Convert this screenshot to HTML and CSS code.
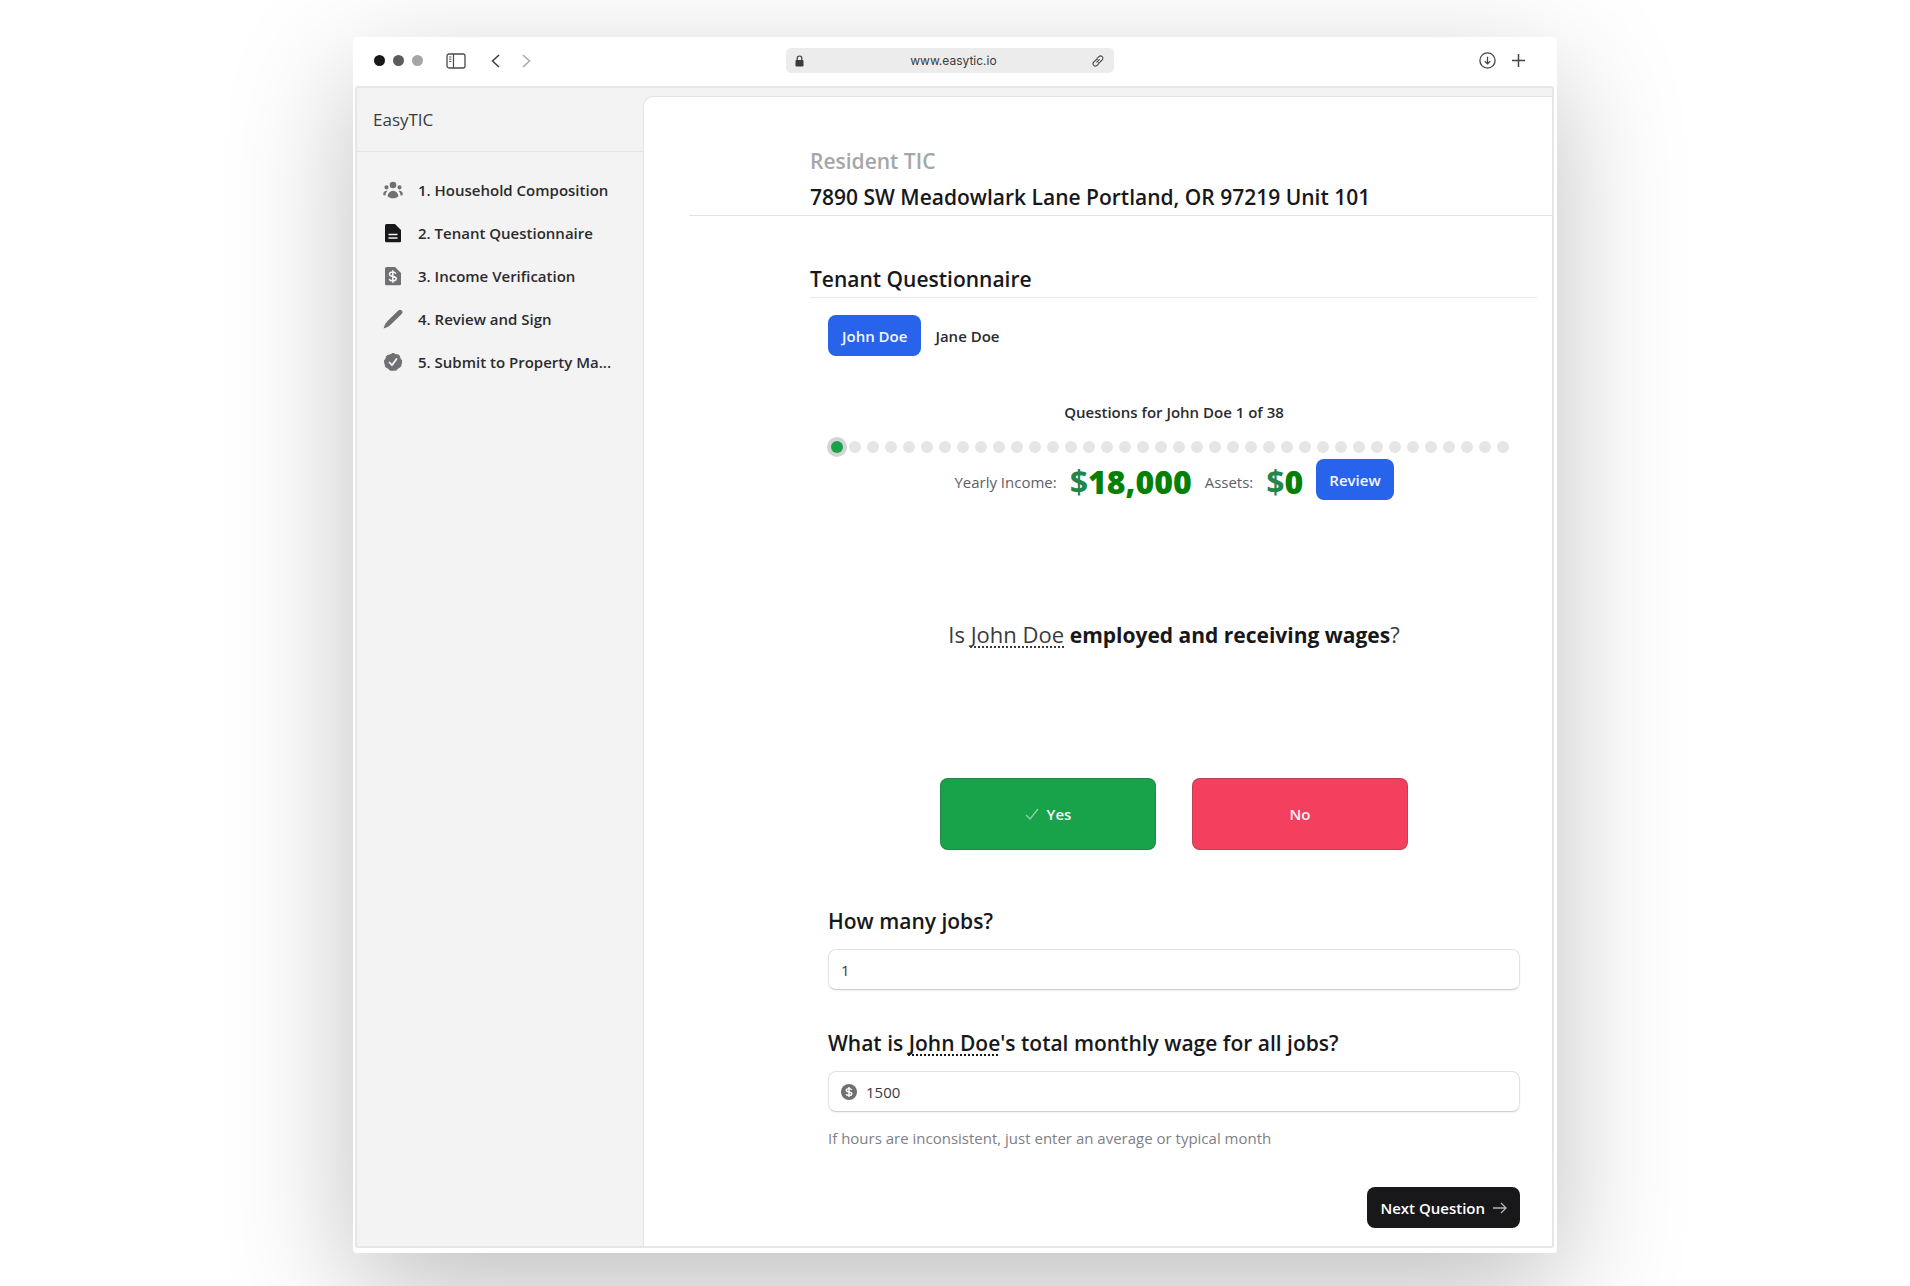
FILE: index.html
```html
<!DOCTYPE html>
<html lang="en">
<head>
<meta charset="utf-8">
<meta name="viewport" content="width=device-width, initial-scale=1">
<title>EasyTIC – Tenant Questionnaire</title>
<link rel="stylesheet" href="styles.css">
</head>
<body>
<div class="window">
  <header class="toolbar">
    <div class="toolbar-left">
      <span class="lights"><i class="light light-close"></i><i class="light light-min"></i><i class="light light-max"></i></span>
      <button class="tool tool-sidebar" aria-label="Toggle sidebar"><svg width="20" height="16" viewBox="0 0 20 16" fill="none" stroke="#4a4a4c"><rect x="1" y="1" width="18" height="14" rx="2" stroke-width="1.3"/><path d="M7.500 1v14" stroke-width="1.2"/><path d="M3 4h2.500M3 6.200h2.500M3 8.400h2.500" stroke-width=".9"/></svg></button>
      <button class="tool tool-back" aria-label="Back"><svg width="9" height="14" viewBox="0 0 9 14" fill="none" stroke="#3c3c3e" stroke-width="1.500"><path d="M8 1 1.500 7 8 13"/></svg></button>
      <button class="tool" aria-label="Forward"><svg width="9" height="14" viewBox="0 0 9 14" fill="none" stroke="#a8a8aa" stroke-width="1.500"><path d="m1 1 6.500 6L1 13"/></svg></button>
    </div>
    <div class="address">
      <svg width="9" height="12" viewBox="0 0 9 12"><rect x=".5" y="5" width="8" height="6.500" rx="1" fill="#3a3a3c"/><path d="M2.200 5.500V3.300a2.300 2.300 0 0 1 4.600 0v2.200" fill="none" stroke="#3a3a3c" stroke-width="1.200"/></svg>
      <span class="url">www.easytic.io</span>
      <svg width="12" height="12" viewBox="0 0 12 12" fill="none" stroke="#4a4a4c" stroke-width="1.100" stroke-linecap="round"><path d="M4.800 7.200 7.400 4.600M5 3.600l1.900-1.900a2.300 2.300 0 0 1 3.300 3.300L8.300 6.900a2.300 2.300 0 0 1-1.500.7M7 8.400l-1.900 1.900A2.300 2.300 0 0 1 1.800 7l1.900-1.900a2.300 2.300 0 0 1 1.500-.7"/></svg>
    </div>
    <div class="toolbar-right">
      <button class="tool" aria-label="Downloads"><svg width="17" height="17" viewBox="0 0 17 17" fill="none" stroke="#454548" stroke-width="1.300"><circle cx="8.500" cy="8.500" r="7.600"/><path d="M8.500 4.800v7M5.800 9.200l2.700 2.700 2.700-2.700"/></svg></button>
      <button class="tool" aria-label="New tab"><svg width="13" height="13" viewBox="0 0 13 13" stroke="#454548" stroke-width="1.500"><path d="M6.500 0v13M0 6.500h13"/></svg></button>
    </div>
  </header>

  <div class="app">
    <aside class="sidebar">
      <div class="brand">EasyTIC</div>
      <nav class="steps">
        <a class="step" href="#household"><svg viewBox="0 0 20 20" fill="currentColor"><path d="M10 8.300a3.300 3.300 0 1 0 0-6.600 3.300 3.300 0 0 0 0 6.600ZM5.600 7.300a2.100 2.100 0 1 1-4.200 0 2.100 2.100 0 0 1 4.200 0ZM.400 15.300C-.200 12.800 1 10.500 4.600 10.800 3.200 12 2.500 13.800 2.400 15.600ZM19.600 15.300C20.200 12.800 19 10.500 15.400 10.800 16.800 12 17.500 13.800 17.600 15.600ZM18.600 7.300a2.100 2.100 0 1 1-4.200 0 2.100 2.100 0 0 1 4.200 0ZM4.600 16.200a5.400 5.400 0 0 1 10.800 0C14 17.700 12 18.300 10 18.300s-4-.6-5.400-2.100Z"/></svg><span>1. Household Composition</span></a>
        <a class="step step-current" href="#questionnaire"><svg viewBox="0 0 20 20"><path fill="currentColor" d="M3.500 1H12l6 6v11a1.300 1.300 0 0 1-1.300 1.300H3.500A1.500 1.500 0 0 1 2 17.800V2.500A1.500 1.500 0 0 1 3.500 1Z"/><path stroke="#f3f3f3" stroke-width="1.400" d="M5.500 11.500h9M5.500 15h9"/></svg><span>2. Tenant Questionnaire</span></a>
        <a class="step" href="#income"><svg viewBox="0 0 20 20"><path fill="currentColor" d="M3.500 1H12l6 6v11a1.300 1.300 0 0 1-1.300 1.300H3.500A1.500 1.500 0 0 1 2 17.800V2.500A1.500 1.500 0 0 1 3.500 1Z"/><path fill="none" stroke="#f3f3f3" stroke-width="1.600" d="M13 7.600C12.300 6.600 11.100 6 9.600 6 7.800 6 6.500 6.800 6.500 8.200c0 3 6.700 1.300 6.700 4.400 0 1.400-1.400 2.300-3.400 2.300-1.700 0-3-.7-3.600-1.800M9.800 4.200v12.600"/></svg><span>3. Income Verification</span></a>
        <a class="step" href="#sign"><svg viewBox="0 0 20 20" fill="currentColor"><path d="M15.300 1.500a2.400 2.400 0 0 1 3.400 3.400L7.600 15.700c-1.700 1.700-4 2.800-7 3.700.8-3 2-5.500 3.700-7.200Z"/></svg><span>4. Review and Sign</span></a>
        <a class="step" href="#submit"><svg viewBox="0 0 20 20"><path fill="currentColor" d="M10 1.300 12.700 2.500 15.900 3.200 17 6.200 18.700 8.600 18.300 11.500 17.700 14.400 15.300 16.100 13.200 18.100 10.200 18.200 7.200 18.200 5 16.200 2.600 14.800 2 11.900 1.400 9 2.900 6.500 4 3.700 6.900 2.900Z" stroke="currentColor" stroke-width="1" stroke-linejoin="round"/><path fill="none" stroke="#f3f3f3" stroke-width="1.800" stroke-linecap="round" stroke-linejoin="round" d="m6.500 10.500 2.500 2.700 4.500-6.200"/></svg><span>5. Submit to Property Ma...</span></a>
      </nav>
    </aside>

    <main class="panel">
      <header class="unit">
        <p class="unit-kind">Resident TIC</p>
        <h1 class="heading">7890 SW Meadowlark Lane Portland, OR 97219 Unit 101</h1>
      </header>
      <section class="content">
        <h2 class="heading section-title">Tenant Questionnaire</h2>
        <form class="form">
          <div class="tabs">
            <button type="button" class="btn btn-blue">John Doe</button>
            <button type="button" class="btn btn-plain">Jane Doe</button>
          </div>
          <p class="progress-label">Questions for John Doe 1 of 38</p>
          <div class="dots">
            <i class="dot dot-current"></i><i class="dot"></i><i class="dot"></i><i class="dot"></i><i class="dot"></i><i class="dot"></i><i class="dot"></i><i class="dot"></i><i class="dot"></i><i class="dot"></i><i class="dot"></i><i class="dot"></i><i class="dot"></i><i class="dot"></i><i class="dot"></i><i class="dot"></i><i class="dot"></i><i class="dot"></i><i class="dot"></i><i class="dot"></i><i class="dot"></i><i class="dot"></i><i class="dot"></i><i class="dot"></i><i class="dot"></i><i class="dot"></i><i class="dot"></i><i class="dot"></i><i class="dot"></i><i class="dot"></i><i class="dot"></i><i class="dot"></i><i class="dot"></i><i class="dot"></i><i class="dot"></i><i class="dot"></i><i class="dot"></i><i class="dot"></i>
          </div>
          <div class="totals">
            <span class="total-label">Yearly Income:</span>
            <span class="amount"><span class="currency">$</span>18,000</span>
            <span class="total-label">Assets:</span>
            <span class="amount"><span class="currency">$</span>0</span>
            <button type="button" class="btn btn-blue btn-review">Review</button>
          </div>
          <p class="question">Is <span class="person">John Doe</span> <strong>employed and receiving wages</strong>?</p>
          <div class="answers">
            <button type="button" class="btn answer answer-yes"><svg width="14" height="12" viewBox="0 0 14 12" fill="none" stroke="#8fd0a6" stroke-width="1.300"><path d="m1 7 4 4 8-10"/></svg>Yes</button>
            <button type="button" class="btn answer answer-no">No</button>
          </div>
          <div class="field">
            <label class="field-label" for="jobs">How many jobs?</label>
            <div class="control"><input id="jobs" type="text" value="1"></div>
          </div>
          <div class="field">
            <label class="field-label" for="wage">What is <span class="person">John Doe</span>'s total monthly wage for all jobs?</label>
            <div class="control"><svg width="16" height="16" viewBox="0 0 16 16" fill="none"><circle cx="8" cy="8" r="8" fill="#6f6f74"/><path d="M10.800 5.800C10.300 5 9.300 4.600 8 4.600c-1.600 0-2.800.6-2.800 1.700 0 2.400 5.600 1 5.600 3.400 0 1.100-1.200 1.800-2.800 1.800-1.400 0-2.500-.5-3-1.300M8 2.900v10.200" stroke="#fff" stroke-width="1.400"/></svg><input id="wage" type="text" value="1500"></div>
            <p class="hint">If hours are inconsistent, just enter an average or typical month</p>
          </div>
          <div class="actions">
            <button type="button" class="btn btn-dark">Next Question<svg width="14" height="12" viewBox="0 0 14 12" fill="none" stroke="#b4b4b8" stroke-width="1.300"><path d="M0 6h13M8 1l5 5-5 5"/></svg></button>
          </div>
        </form>
      </section>
    </main>
  </div>
</div>
</body>
</html>
```

FILE: styles.css
```css
* { box-sizing: border-box; }

body {
  margin: 0;
  padding: 37px 32px 34px;
  background: #fff;
  color: #18181b;
  font: 400 15px/24px "Open Sans", "Noto Sans", sans-serif;
}

h1, h2, p { margin: 0; }
button, input { font: inherit; color: inherit; }
button { cursor: pointer; }
svg { flex: none; display: block; }

.window {
  max-width: 1204px;
  margin: 0 auto;
  padding: 0 3px 5px 2px;
  border-radius: 4px;
  background: #fff;
  box-shadow: 0 40px 124px rgba(0, 0, 0, .25);
}

/* Browser toolbar */
.toolbar {
  display: grid;
  grid-template-columns: 1fr minmax(160px, 328px) 1fr;
  align-items: center;
  height: 49px;
  padding: 0 29px 2px 19px;
}
.toolbar-left, .toolbar-right { display: flex; align-items: center; }
.toolbar-right { justify-content: flex-end; gap: 16px; }
.lights { display: flex; gap: 8px; }
.light { width: 11px; height: 11px; border-radius: 50%; }
.light-close { background: #18181a; }
.light-min { background: #5c5c5f; }
.light-max { background: #a2a6a6; }
.tool { padding: 0; border: 0; background: none; }
.tool-sidebar { margin-left: 23px; }
.tool-back { margin: 0 22px 0 25px; }
.address {
  display: flex;
  align-items: center;
  height: 25px;
  padding: 0 10px 0 9px;
  border-radius: 5px;
  background: #ececec;
  color: #3a3a3c;
  font: 400 12px/16px Inter, sans-serif;
}
.url { flex: 1; padding-left: 12px; text-align: center; }

/* App frame */
.app {
  display: grid;
  grid-template-columns: 286px 1fr;
  border: 2px solid #e6e6e6;
  border-radius: 3px;
  background: #f3f3f3;
}
.brand {
  display: flex;
  align-items: center;
  height: 64px;
  padding: 0 16px;
  border-bottom: 1px solid #e4e4e4;
  color: #3a3a3d;
  font-size: 17px;
}
.steps { display: flex; flex-direction: column; padding: 16px 26px; }
.step {
  display: flex;
  align-items: center;
  gap: 15px;
  height: 43px;
  color: #707074;
  font-weight: 600;
  text-decoration: none;
}
.step svg { width: 20px; height: 20px; }
.step span { color: #2b2b2e; white-space: nowrap; }
.step-current { color: #18181b; }

.panel {
  min-width: 0;
  margin-top: 8px;
  border-top: 1px solid #e4e4e4;
  border-left: 1px solid #e4e4e4;
  border-top-left-radius: 10px;
  background: #fff;
}
.unit {
  margin-left: 45px;
  padding: 46px 0 0 121px;
  border-bottom: 1px solid #e4e4e4;
}
.unit-kind, .heading { font-size: 21px; line-height: 36px; font-weight: 600; }
.unit-kind { color: #a4a7a7; }
.content { padding: 45px 15px 18px 166px; }
.section-title { border-bottom: 1px solid #e8e8e8; }
.form { padding: 17px 17px 0 18px; }

/* Buttons */
.btn {
  display: inline-flex;
  align-items: center;
  justify-content: center;
  gap: 8px;
  height: 41px;
  padding: 0 13px;
  border: 0;
  border-radius: 8px;
  font-size: 15px;
  font-weight: 600;
  white-space: nowrap;
}
.btn-blue { background: #2763eb; color: #f4f6fb; }
.btn-plain { background: none; color: #2b2b2e; }
.btn-dark { background: #18181b; color: #fff; }
.btn-review { align-self: flex-start; }

.tabs { display: flex; }
.tabs .btn { padding: 0 14px; }
.progress-label { margin-top: 44px; text-align: center; color: #2b2b2e; font-weight: 600; }
.dots { display: flex; gap: 6px; margin-top: 17px; padding: 0 3px; }
.dot { flex: none; width: 12px; height: 12px; border-radius: 50%; background: #e5e5e5; }
.dot-current { background: #18a34a; box-shadow: 0 0 0 4px #d4d4d6; }

.totals {
  display: flex;
  align-items: center;
  justify-content: center;
  gap: 13px;
  height: 46px;
  margin-top: 6px;
}
.total-label { color: #606064; }
.amount { color: #058005; font-size: 32px; line-height: 40px; font-weight: 800; }
.currency { color: #24854a; font-weight: 700; }

.question { margin-top: 113px; text-align: center; color: #3a3a3d; font-size: 22px; line-height: 32px; }
.question strong { color: #18181b; font-size: 21px; font-weight: 700; }
.person { text-decoration: underline dotted 2px; text-underline-offset: 3px; text-decoration-skip-ink: none; }

.answers { display: flex; justify-content: center; gap: 36px; margin: 127px 0 55px; }
.answer { width: 216px; height: 72px; color: #f4f6fb; box-shadow: inset 0 0 0 1px rgba(70, 70, 70, .3); }
.answer-yes { background: #18a34a; }
.answer-no { background: #f53f5e; }

/* Fields */
.field + .field { margin-top: 37px; }
.field-label { display: block; margin-bottom: 12px; font-size: 21px; line-height: 32px; font-weight: 600; }
.control {
  display: flex;
  align-items: center;
  gap: 9px;
  height: 41px;
  padding: 0 12px;
  border: 1px solid #e2e2e2;
  border-bottom-color: #cfcfcf;
  border-radius: 8px;
  box-shadow: 0 1px 2px rgba(0, 0, 0, .06);
}
.control input { flex: 1; min-width: 0; padding: 0; border: 0; background: none; outline: 0; color: #3a3a3d; }
.hint { margin-top: 14px; color: #808084; }
.actions { display: flex; justify-content: flex-end; margin-top: 37px; }
```
